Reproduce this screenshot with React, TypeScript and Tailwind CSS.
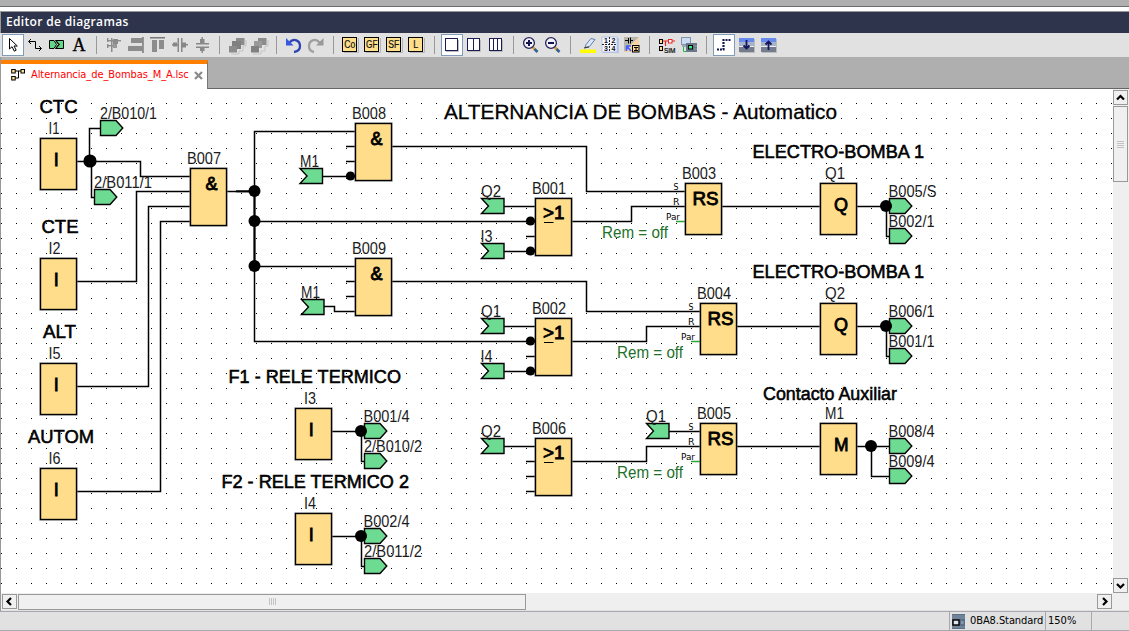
import type { ReactNode } from "react";

const Cell = ({ children, active }: { children: ReactNode; active?: boolean }) => (
  <button className={active ? "size-[22px] shrink-0 bg-white outline-1 -outline-offset-1 outline-[#7f9db9]" : "size-[22px] shrink-0"}>
    <svg viewBox="0 0 22 22" className="block size-[22px]">{children}</svg>
  </button>
);

const Sep = () => (
  <div className="flex h-[22px] w-[13px] shrink-0 justify-center py-0.5">
    <div className="w-px bg-[#999]" />
  </div>
);

const Letter = ({ t, w }: { t: string; w: number }) => (
  <Cell>
    <path d="M4 18.5H18.5V4" fill="none" stroke="#b5b5b5" />
    <rect x="2.5" y="3.5" width="14" height="14" fill="#ffdf8c" stroke="#000" />
    <text x={9.7 - w / 2} y="14" textLength={w} lengthAdjust="spacingAndGlyphs" className="fill-[#111] font-['Liberation_Sans'] text-[10px]" stroke="#111" strokeWidth=".2">{t}</text>
  </Cell>
);

const Pages = ({ n, active }: { n: number; active?: boolean }) => (
  <Cell active={active}>
    <path d="M5 17.5H17.5V6" fill="none" stroke="#bbb" />
    <rect x="4.5" y="4.5" width="12" height="12" fill="#fff" stroke="#1c1c54" />
    {n === 2 && <path d="M10.5 5V16" stroke="#1c1c54" />}
    {n === 3 && <path d="M8.5 5V16M12.5 5V16" stroke="#1c1c54" />}
  </Cell>
);

const Magnifier = ({ plus }: { plus?: boolean }) => (
  <Cell>
    <path d="M12.5 13L15 15.5" stroke="#e0a030" strokeWidth="2.6" />
    <path d="M14.5 15L17.5 18" stroke="#35618f" strokeWidth="2.6" />
    <circle cx="9" cy="9" r="5.4" fill="#f4f4ff" stroke="#26265c" strokeWidth="1.3" />
    <path d={plus ? "M6 9H12M9 6V12" : "M6 9H12"} stroke="#14144c" strokeWidth="2" />
  </Cell>
);

const Layer = ({ d }: { d: string }) => (
  <Cell>
    <rect x="5" y="5" width="15" height="14" fill="#bbb" />
    <rect x="4" y="4" width="15" height="4" fill="#6889ee" />
    <rect x="4" y="8" width="15" height="4" fill="#a6b3c9" />
    <rect x="4" y="12" width="15" height="1" fill="#eee" />
    <rect x="4" y="13" width="15" height="5" fill="#737d8d" />
    <path d={d} fill="none" stroke="#14145a" strokeWidth="1.8" />
  </Cell>
);

const Toolbar = () => (
  <div className="flex h-6 shrink-0 items-start bg-[#e1e1e1] pt-px pl-0.5">
    <Cell active>
      <path d="M7.5 4.5V15L10 12.7L12.3 17.2L14.2 16.2L12 12H15.3Z" fill="#fff" stroke="#000" />
    </Cell>
    <Cell>
      <path d="M5 7.5H11.5V14.5H17M7 5L4.5 7.5L7 10M15 12L17.5 14.5L15 17" fill="none" stroke="#000" />
    </Cell>
    <Cell>
      <path d="M3.5 6.5H8L10.5 10.5L8 14.5H3.5Z" fill="#63d988" stroke="#000" />
      <path d="M9.5 6.5H17.5V14.5H9.5L12.5 10.5Z" fill="#63d988" stroke="#000" />
      <path d="M10 6.5L13.5 10.5L10 14.5" fill="none" stroke="#000" />
    </Cell>
    <Cell>
      <text x="11" y="17" textAnchor="middle" className="fill-black font-['Liberation_Serif'] text-[18px]" stroke="#000" strokeWidth=".3">A</text>
    </Cell>
    <Sep />
    <Cell>
      <g fill="#8c8c8c"><rect x="5" y="6" width="13" height="1.4" /><rect x="8" y="4" width="1.5" height="14" /><rect x="10" y="5" width="5" height="5" /><rect x="5" y="11" width="8" height="1.4" /><rect x="10" y="10" width="4" height="4" fill="#999" /><rect x="4" y="4" width="1.4" height="4" /><rect x="4" y="10" width="1.4" height="4" /></g>
    </Cell>
    <Cell>
      <g fill="#8c8c8c"><rect x="6" y="4" width="11" height="5" /><rect x="3" y="12" width="14" height="5" /><rect x="17.2" y="3" width="1.5" height="16" fill="#777" /></g>
    </Cell>
    <Cell>
      <g fill="#8c8c8c"><rect x="3" y="3" width="15" height="1.5" fill="#777" /><rect x="5" y="6" width="5" height="12" /><rect x="12" y="6" width="5" height="9" /></g>
    </Cell>
    <Cell>
      <g fill="#888"><rect x="3" y="10" width="7" height="1.5" /><rect x="12" y="10" width="7" height="1.5" /><rect x="8.5" y="4" width="1.5" height="14" /><rect x="12" y="4" width="1.5" height="14" /><rect x="4" y="8.5" width="4" height="4" /><rect x="13" y="8.5" width="4" height="5" /></g>
    </Cell>
    <Cell>
      <g fill="#888"><rect x="5" y="9" width="13" height="1.5" /><rect x="5" y="12.5" width="13" height="1.5" /><rect x="10.5" y="3" width="1.4" height="6" /><rect x="10.5" y="14" width="1.4" height="5" /><rect x="9" y="5" width="4.5" height="4" /><rect x="9" y="13" width="4.5" height="4" /></g>
    </Cell>
    <Sep />
    <Cell>
      <path d="M5 20H13V17H17V12H20V6" fill="none" stroke="#c4c4c4" />
      <g fill="#8c8c8c"><rect x="10" y="4" width="8.5" height="7" /><rect x="6" y="7" width="9" height="8" fill="#808080" /><rect x="3" y="12" width="8" height="6.5" /></g>
    </Cell>
    <Cell>
      <path d="M5 20H13V17H17V12H20V6" fill="none" stroke="#c4c4c4" />
      <g fill="#8c8c8c"><rect x="10" y="4" width="8.5" height="7" /><rect x="6" y="7" width="8" height="7" fill="#999" /><rect x="3" y="12" width="8" height="6.5" fill="#808080" /></g>
    </Cell>
    <Sep />
    <Cell>
      <path d="M6 9C11 3 17 7 17 12C17 15 15 17.5 11 18" fill="none" stroke="#2c42b4" strokeWidth="2.3" />
      <path d="M3 4V11.5H10.5Z" fill="#3558e0" />
    </Cell>
    <Cell>
      <path d="M15 9C10 3 4 7 4 12C4 15 6 17.5 9 18" fill="none" stroke="#a0a0a0" strokeWidth="2.3" />
      <path d="M18.5 4V11.5H11Z" fill="#999" />
    </Cell>
    <Sep />
    <Letter t="Co" w={11} />
    <Letter t="GF" w={11.5} />
    <Letter t="SF" w={11} />
    <Letter t="L" w={5} />
    <Sep />
    <Pages n={1} active />
    <Pages n={2} />
    <Pages n={3} />
    <Sep />
    <Magnifier plus />
    <Magnifier />
    <Sep />
    <Cell>
      <rect x="3" y="15.5" width="16" height="3.5" fill="#ffff00" />
      <path d="M8 13.5L9 10.5L14 4.5L18 5.5L12.5 12.5Z" fill="#dce8f8" stroke="#637ca8" />
      <path d="M7 14L12 13" stroke="#333" strokeWidth="1.2" />
    </Cell>
    <Cell>
      <rect x="4" y="4" width="16" height="15" fill="#b8c4e8" />
      <rect x="3" y="3" width="15" height="15" fill="#f2f5ff" stroke="#b0bde0" strokeWidth=".8" />
      <path d="M3 10.5H18M10.5 3V18" stroke="#222" strokeDasharray="2 1" />
      <g className="fill-[#111] font-['Liberation_Sans'] text-[7px] font-bold"><text x="5" y="9">1</text><text x="12.5" y="9">2</text><text x="5" y="17">3</text><text x="12.5" y="17">4</text></g>
    </Cell>
    <Cell>
      <path d="M3 3H18L3 18Z" fill="#b5b5aa" /><path d="M18 3V18H3Z" fill="#f6d3a4" />
      <path d="M4 6.5H7.5V4M7.5 6V9.5M9.5 3.5V9.5M9.5 6.5H12" fill="none" stroke="#000" />
      <path d="M5 12H10M5.5 12V17M6 12.5L10 17" fill="none" stroke="#4060ff" strokeWidth="1.6" />
      <rect x="11.5" y="11.5" width="6.5" height="6.5" fill="#ffd79a" stroke="#000" /><path d="M13 13.5H17M13 16.5H17M15 13.5V16.5" stroke="#000" />
    </Cell>
    <Sep />
    <Cell>
      <path d="M7 7H13M9.5 7V12M16 7H19" fill="none" stroke="#e22" strokeWidth="1.2" />
      <g fill="#ffe08a" stroke="#000"><rect x="3.5" y="5.5" width="3" height="4" /><rect x="3.5" y="12.5" width="3" height="4" /></g>
      <rect x="12.5" y="5.5" width="3.5" height="3.5" fill="#fff" stroke="#e22" />
      <text x="8" y="18.5" textLength="11.5" lengthAdjust="spacingAndGlyphs" className="fill-black font-['Liberation_Sans'] text-[7.5px]" stroke="#000" strokeWidth=".2">SIM</text>
    </Cell>
    <Cell>
      <rect x="3.5" y="3.5" width="9" height="7" fill="#cbdcf5" stroke="#8793a8" />
      <path d="M4 12H13" stroke="#8793a8" strokeWidth="1.5" />
      <path d="M5.5 13V17.5H9" fill="none" stroke="#22bb44" />
      <rect x="8" y="9" width="11" height="9" fill="#68788a" /><rect x="10.5" y="11.5" width="4" height="3.5" fill="#2ef07e" stroke="#000" />
      <path d="M16 12H19M16 15H19" stroke="#999" />
    </Cell>
    <Sep />
    <Cell active>
      <path d="M4 15.5H10.5V6H18" fill="none" stroke="#15154a" strokeWidth="2.2" strokeDasharray="2 1" />
    </Cell>
    <Layer d="M11.5 6V14M8.5 11.5L11.5 14.5L14.5 11.5" />
    <Layer d="M11.5 16V8M8.5 10.5L11.5 7.5L14.5 10.5" />
  </div>
);

const wires = [
  "M77 161.5H140.5V176.5H190", "M89.5 161V128.5H100", "M91.5 161V197.5H94",
  "M77 281.5H136.5V191.5H190", "M77 386.5H148.5V206.5H190", "M77 491.5H160.5V221.5H190",
  "M227 191.5H254", "M355 131.5H254.5V341.5H535", "M254 221.5H535", "M254 266.5H355",
  "M346 146.5H355M346 161.5H355M323 176.5H355", "M346 281.5H355M346 296.5H355M324 306.5H334.5V311.5H355",
  "M392 146.5H586.5V191.5H685", "M392 281.5H586.5V311.5H700",
  "M504 206.5H535M526 236.5H535M504 251.5H535", "M572 221.5H631.5V206.5H685",
  "M504 326.5H535M526 356.5H535M504 371.5H535", "M572 341.5H646.5V326.5H700",
  "M504 446.5H535M526 461.5H535M526 476.5H535M526 491.5H535", "M572 461.5H646.5V446.5H700M669 431.5H700",
  "M722 206.5H820M737 326.5H820M737 446.5H820",
  "M857 206.5H889M886.5 206V236.5H889", "M857 326.5H889M886.5 326V356.5H889", "M857 446.5H889M871.5 446V476.5H889",
  "M332 431.5H364M361.5 431V461.5H364", "M332 536.5H364M361.5 536V566.5H364",
];

type Block = [number, number, number, string];
const blocks: Block[] = [
  [40.5, 138.5, 51, "I"], [40.5, 258.5, 51, "I"], [40.5, 363.5, 51, "I"], [40.5, 468.5, 51, "I"],
  [295.5, 408.5, 51, "I"], [295.5, 513.5, 51, "I"],
  [190.5, 168.5, 57, "&"], [355.5, 123.5, 57, "&"], [355.5, 258.5, 57, "&"],
  [535.5, 198.5, 57, ">1"], [535.5, 318.5, 57, ">1"], [535.5, 438.5, 57, ">1"],
  [685.5, 183.5, 51, "RS"], [700.5, 303.5, 51, "RS"], [700.5, 423.5, 51, "RS"],
  [820.5, 183.5, 51, "Q"], [820.5, 303.5, 51, "Q"], [820.5, 423.5, 51, "M"],
];

const outTags = [
  [100.5, 120.5], [94.5, 189.5], [889.5, 198.5], [889.5, 228.5], [889.5, 318.5], [889.5, 348.5],
  [889.5, 438.5], [889.5, 468.5], [364.5, 423.5], [364.5, 453.5], [364.5, 528.5], [364.5, 558.5],
];
const inTags = [
  [300, 168.5], [301.5, 299.5], [481.5, 198.5], [481.5, 243.5], [481.5, 318.5], [481.5, 363.5], [481.5, 438.5], [646.5, 423.5],
];
const nodes = [
  [90, 161, 6.6], [254.5, 191, 6], [254.5, 221, 6], [254.5, 266, 6], [886, 206, 6], [886, 326, 6], [871, 446, 6],
  [361, 431, 6], [361, 536, 6], [350.5, 176, 4.6], [530.5, 221, 4.6], [530.5, 251, 4.6], [530.5, 341, 4.6], [530.5, 371, 4.6],
];

type Label = [string, number, number, number];
const labels: Label[] = [
  ["2/B010/1", 100, 119, 57], ["2/B011/1", 94, 188, 58], ["I1", 48.5, 134, 11], ["I2", 48.5, 254, 12], ["I5", 48.5, 359, 12], ["I6", 48.5, 464, 12],
  ["I3", 304, 404, 12], ["I4", 304, 509, 12], ["B007", 187, 164, 34], ["B008", 352, 119, 34], ["B009", 352, 254, 34],
  ["M1", 300, 167, 19], ["M1", 301, 298, 19], ["Q2", 481, 197, 20], ["I3", 480.5, 242, 12], ["Q1", 481, 317, 20], ["I4", 480.5, 362, 12],
  ["Q2", 481, 437, 20], ["Q1", 646, 422, 20], ["B001", 532, 194, 34], ["B002", 532, 314, 34], ["B006", 532, 434, 34],
  ["B003", 682, 179, 34], ["B004", 697, 299, 34], ["B005", 697, 419, 34], ["Q1", 825, 179, 20], ["Q2", 825, 299, 20], ["M1", 825, 419, 19],
  ["B005/S", 888.5, 197, 48], ["B002/1", 888.5, 227, 46], ["B006/1", 888.5, 317, 46], ["B001/1", 888.5, 347, 46],
  ["B008/4", 888.5, 437, 46], ["B009/4", 888.5, 467, 46], ["B001/4", 363.5, 422, 46], ["2/B010/2", 364, 452, 58],
  ["B002/4", 363.5, 527, 46], ["2/B011/2", 364, 557, 58],
];
const headings: Label[] = [
  ["CTC", 39.5, 112.5, 38], ["CTE", 41.5, 232.5, 37], ["ALT", 43, 338, 33], ["AUTOM", 28, 443, 66],
  ["F1 - RELE TERMICO", 228.5, 383, 172.5], ["F2 - RELE TERMICO 2", 221.5, 488, 187.5],
  ["ELECTRO-BOMBA 1", 752.5, 158, 171.5], ["ELECTRO-BOMBA 1", 752.5, 278, 171.5], ["Contacto Auxiliar", 763, 400, 134],
];

const symbols: Record<string, [number, number, number]> = {
  I: [13.3, 27.5, 5], "&": [15, 21.5, 12], ">1": [7.5, 20, 21.5], RS: [7, 21.5, 26], Q: [13.5, 27.5, 14], M: [13.5, 27.5, 14.5],
};

const Diagram = () => (
  <svg viewBox="1 89 1112 504" className="block h-[504px] w-[1112px] shrink-0 bg-white font-['Liberation_Sans',sans-serif]">
    <defs>
      <pattern id="grid" x="1" y="103" width="15" height="15" patternUnits="userSpaceOnUse">
        <rect width="1" height="1" fill="#000" />
      </pattern>
    </defs>
    <rect x="1" y="90" width="1112" height="503" fill="url(#grid)" />
    <g fill="none" stroke="#000" strokeWidth="1.5">
      {wires.map((d) => <path key={d} d={d} />)}
      <path d="M254.5 191V266" strokeWidth="2" />
      <path d="M236 191.3H254" strokeWidth="2" />
      <path d="M676 221.5H685M691 341.5H700M691 461.5H700" stroke="#2fa43b" />
    </g>
    {blocks.map(([x, y, h, t]) => {
      const [dx, dy, w] = symbols[t];
      return (
        <g key={`${x}-${y}`}>
          <rect x={x} y={y} width="36" height={h} fill="none" stroke="#999" strokeOpacity=".6" strokeWidth="2.6" />
          <rect x={x} y={y} width="36" height={h} fill="#ffdd8b" stroke="#000" strokeWidth="1.4" />
          <text x={x + dx} y={y + dy} textLength={w} lengthAdjust="spacingAndGlyphs" className="text-[18px]" stroke="#000" strokeWidth=".85">{t}</text>
          {t === ">1" && <path d={`M${x + 8.5} ${y + 24}h9.5`} stroke="#000" />}
        </g>
      );
    })}
    <g fill="#6edb92" stroke="#000" strokeWidth="1.4">
      {outTags.map(([x, y]) => <path key={`${x}-${y}`} d={`M${x} ${y}h15.5l6.8 7.5l-6.8 7.5h-15.5z`} />)}
      {inTags.map(([x, y]) => <path key={`${x}-${y}`} d={`M${x} ${y}h22.5v15h-22.5l7-7.5z`} />)}
    </g>
    {nodes.map(([x, y, r]) => <circle key={`${x}-${y}`} cx={x} cy={y} r={r} />)}
    <g className="fill-[#1c1c1c] text-[16px]">
      {labels.map(([t, x, y, w]) => <text key={`${x}-${y}`} x={x} y={y} textLength={w} lengthAdjust="spacingAndGlyphs">{t}</text>)}
    </g>
    <g className="fill-black text-[18px]" stroke="#000" strokeWidth=".55">
      {headings.map(([t, x, y, w]) => <text key={`${x}-${y}`} x={x} y={y} textLength={w} lengthAdjust="spacingAndGlyphs">{t}</text>)}
    </g>
    <text x="444" y="118.7" textLength="393" lengthAdjust="spacingAndGlyphs" className="text-[20px]" stroke="#000" strokeWidth=".3">ALTERNANCIA DE BOMBAS - Automatico</text>
    {[[685, 190], [700, 310], [700, 430]].map(([x, y]) => (
      <g key={y} className="font-['DejaVu_Sans_Condensed','DejaVu_Sans'] text-[9.5px]">
        <text x={x - 11.5} y={y} textLength="5" lengthAdjust="spacingAndGlyphs">S</text>
        <text x={x - 12} y={y + 15} textLength="6.5" lengthAdjust="spacingAndGlyphs">R</text>
        <text x={x - 19} y={y + 30} textLength="14" lengthAdjust="spacingAndGlyphs">Par</text>
        <text x={x - 83} y={y + 48} textLength="66" lengthAdjust="spacingAndGlyphs" className="fill-[#23702a] font-['Liberation_Sans'] text-[16px]">Rem = off</text>
      </g>
    ))}
  </svg>
);

const Arrow = ({ d }: { d: string }) => (
  <div className="size-[15px] shrink-0 border border-[#999] bg-[#f0f0f0]">
    <svg viewBox="0 0 13 13" className="block size-[13px]"><path d={d} fill="none" stroke="#000" strokeWidth="2.2" /></svg>
  </div>
);

export default function App() {
  return (
    <div className="flex h-[631px] w-[1129px] flex-col overflow-hidden bg-[#e1e1e1]">
      <div className="h-[7px] shrink-0 border-b border-[#6c6c6c] bg-[#afafaf]" />
      <div className="h-[5px] shrink-0 border-b border-[#999] bg-white" />
      <div className="flex h-[599px] shrink-0 flex-col border-l border-[#999]">
        <div className="flex h-[21px] shrink-0 items-center bg-[#2d344c] pl-[5px] font-['Open_Sans',sans-serif] text-xs font-semibold tracking-[0.34px] text-white">
          <span className="-mt-0.5 whitespace-nowrap">Editor de diagramas</span>
        </div>
        <div className="-ml-px flex shrink-0 flex-col"><Toolbar /></div>
        <div className="flex h-8 shrink-0 bg-[#afafaf] pt-[3px]">
          <div className="flex w-[207px] shrink-0 items-center border-t-4 border-r border-t-[#ff8000] border-r-[#777] bg-white pl-[10px]">
            <svg viewBox="0 0 15 13" className="-mt-[4px] mr-[4px] h-[13px] w-[15px] shrink-0">
              <path d="M4 3H10M7.5 3V10H4" fill="none" stroke="#000" />
              <g fill="#ffe08a" stroke="#000"><rect x=".7" y="1.5" width="3.5" height="3.5" /><rect x=".7" y="8.5" width="3.5" height="3.5" /><rect x="10" y="1.5" width="3.5" height="3.5" /></g>
            </svg>
            <span className="-mt-[2px] w-[158px] pl-px font-['DejaVu_Sans_Condensed','DejaVu_Sans'] text-[11px] tracking-[-0.08px] whitespace-nowrap text-[#ff0000]">Alternancia_de_Bombas_M_A.lsc</span>
            <svg viewBox="0 0 9 9" className="-mt-[3px] ml-[6px] size-[9px] shrink-0"><path d="M1 1L8 8M8 1L1 8" stroke="#8b8b8b" strokeWidth="2.3" /></svg>
          </div>
          <div className="grow border-b border-[#666]" />
        </div>
        <div className="flex h-[504px] shrink-0">
          <Diagram />
          <div className="flex w-4 shrink-0 flex-col bg-[#efefef] pt-px">
            <Arrow d="M3 8.5L6.5 5L10 8.5" />
            <div className="mt-px flex h-[76px] w-[15px] flex-col items-center justify-center gap-px border border-[#999] bg-[#f0f0f0]">
              {[0, 1, 2, 3].map((i) => <div key={i} className="h-px w-[7px] bg-[#c2c2c2]" />)}
            </div>
            <div className="grow" />
            <Arrow d="M3 5L6.5 8.5L10 5" />
          </div>
        </div>
        <div className="flex h-[17px] shrink-0 items-center bg-[#efefef] pl-px">
          <Arrow d="M8 3L4.5 6.5L8 10" />
          <div className="ml-px flex h-4 w-[508px] items-center justify-center gap-px border border-[#999] bg-[#f0f0f0]">
            {[0, 1, 2, 3].map((i) => <div key={i} className="h-[7px] w-px bg-[#c2c2c2]" />)}
          </div>
          <div className="grow" />
          <Arrow d="M5 3L8.5 6.5L5 10" />
          <div className="w-[17px]" />
        </div>
      </div>
      <div className="flex h-[20px] shrink-0 border-y border-[#a8a8b0] font-['DejaVu_Sans_Condensed','DejaVu_Sans'] text-[11px] text-black">
        <div className="w-[950px] border-r border-[#a8a8b0]" />
        <div className="flex w-[96px] items-center border-r border-[#a8a8b0] pl-[2px]">
          <svg viewBox="0 0 13 15" className="h-[15px] w-[13px] shrink-0">
            <rect width="13" height="15" fill="#5b6f86" /><path d="M0 2H13M0 4H13M0 13H13" stroke="#9aabbd" strokeWidth=".7" />
            <rect x="1" y="6" width="6" height="5" fill="#dce4ee" stroke="#000" strokeWidth="1.4" /><rect x="9" y="7" width="2.5" height="3" fill="#8898aa" />
          </svg>
          <span className="ml-[5px] tracking-[-0.08px] whitespace-nowrap">0BA8.Standard</span>
        </div>
        <div className="flex w-[46px] items-center border-r border-[#a8a8b0] pl-[2px]">150%</div>
      </div>
    </div>
  );
}
